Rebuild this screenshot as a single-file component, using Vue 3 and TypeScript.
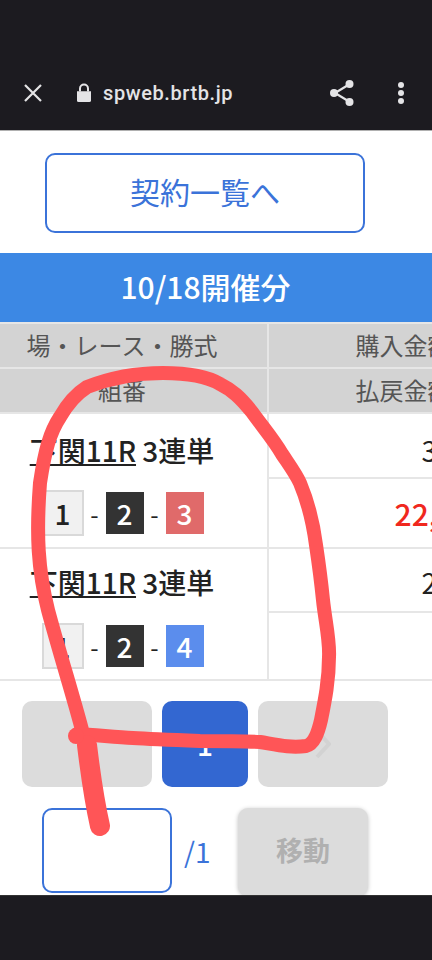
<script setup lang="ts">
interface Ticket { place: string; kind: string; nums: { n: number; cls: string }[]; buy: string; pay: string }
const tickets: Ticket[] = [
  { place: '下関11R', kind: '3連単', nums: [{ n: 1, cls: 'w' }, { n: 2, cls: 'k' }, { n: 3, cls: 'r' }], buy: '300円', pay: '22,400円' },
  { place: '下関11R', kind: '3連単', nums: [{ n: 1, cls: 'w' }, { n: 2, cls: 'k' }, { n: 4, cls: 'b' }], buy: '200円', pay: '' },
]
</script>

<template>
  <div class="screen">
    <header class="toolbar">
      <svg class="ic-x" width="20" height="20" viewBox="0 0 20 20"><path d="M2 2L18 18M18 2L2 18" stroke="#e4e4e6" stroke-width="2.2" fill="none"/></svg>
      <svg class="ic-lock" width="16" height="20" viewBox="0 0 16 20"><path d="M1 8.2h14v9.3a1.6 1.6 0 0 1-1.6 1.6H2.6A1.6 1.6 0 0 1 1 17.5z" fill="#e4e4e6"/><path d="M4 8.5V5.5a4 4 0 0 1 8 0v3" stroke="#e4e4e6" stroke-width="2" fill="none"/></svg>
      <span class="url">spweb.brtb.jp</span>
      <svg class="ic-share" width="26" height="28" viewBox="0 0 26 28"><path d="M20 5.5L6 14L20 22.5" stroke="#e4e4e6" stroke-width="2.2" fill="none"/><circle cx="20.5" cy="5" r="4" fill="#e4e4e6"/><circle cx="5" cy="14" r="4" fill="#e4e4e6"/><circle cx="20.5" cy="23" r="4" fill="#e4e4e6"/></svg>
      <svg class="ic-more" width="8" height="24" viewBox="0 0 8 24"><circle cx="4" cy="4" r="3" fill="#e4e4e6"/><circle cx="4" cy="12" r="3" fill="#e4e4e6"/><circle cx="4" cy="20" r="3" fill="#e4e4e6"/></svg>
    </header>

    <main class="page">
      <div class="top"><button class="list-btn">契約一覧へ</button></div>
      <h2 class="date">10/18開催分</h2>

      <div class="table">
        <div class="th lead">場・レース・勝式</div>
        <div class="th tail">購入金額</div>
        <div class="th lead">組番</div>
        <div class="th tail">払戻金額</div>

        <template v-for="(t, i) in tickets" :key="i">
          <div class="left" :class="'row' + i">
            <div class="title"><u>{{ t.place }}</u> {{ t.kind }}</div>
            <div class="nums">
              <template v-for="(x, j) in t.nums" :key="j">
                <span v-if="j" class="dash">-</span>
                <span class="num" :class="x.cls">{{ x.n }}</span>
              </template>
            </div>
          </div>
          <div class="right" :class="'row' + i">
            <div class="val">{{ t.buy }}</div>
            <div class="val red">{{ t.pay }}</div>
          </div>
        </template>
      </div>

      <nav class="pager">
        <div class="pg">
          <svg width="16" height="28" viewBox="0 0 16 28"><path d="M14 1L2 14L14 27" stroke="#d2d2d2" stroke-width="4" fill="none"/></svg>
        </div>
        <div class="cur">1</div>
        <div class="pg">
          <svg width="16" height="28" viewBox="0 0 16 28"><path d="M2 1L14 14L2 27" stroke="#d2d2d2" stroke-width="4" fill="none"/></svg>
        </div>
      </nav>

      <div class="jump">
        <div class="input"></div>
        <span class="total">/1</span>
        <div class="go">移動</div>
      </div>
    </main>

    <footer class="bottom"></footer>

    <svg class="scribble" width="432" height="960" viewBox="0 0 432 960" fill="none">
      <path d="M99 826C96 790 90 762 84 738C78 712 60 655 48 610C38 570 36 535 40 483C45 450 50 432 60 417C68 403 76 394 87 387C110 378 135 373 163 373C185 373 205 375 220 384C232 390 240 397 252 412C262 426 274 440 282 454C290 466 296 474 300 483C308 502 313 522 316 545C319 565 321 580 323 600C325 620 330 640 329 657C329 680 325 700 321 720C318 733 314 744 306 746C290 748 278 745 260 742C240 741 220 741 200 741C175 740 150 739 133 738C115 737 95 735 77 734" stroke="#ff5557" stroke-width="14" stroke-linecap="round" stroke-linejoin="round"/>
      <path d="M87 745C90 770 93 795 100 826" stroke="#ff5557" stroke-width="20" stroke-linecap="round"/>
      <circle cx="76" cy="736" r="8" fill="#ff5557"/>
    </svg>
  </div>
</template>

<style>
html, body { margin: 0; background: #1c1b20; }
</style>

<style scoped>
.screen {
  position: relative;
  width: 432px;
  height: 960px;
  display: flex;
  flex-direction: column;
  overflow: hidden;
  background: #1c1b20;
  font-family: "Noto Sans CJK JP", "Noto Sans", sans-serif;
}
.toolbar {
  height: 131px;
  box-sizing: border-box;
  flex: none;
  display: flex;
  align-items: center;
  padding: 55px 27px 0 23px;
  border-bottom: 1px solid #b0b0b0;
}
.ic-lock { margin-left: 33px; }
.url {
  margin-left: 11px;
  font-family: Roboto, sans-serif;
  font-weight: 500;
  font-size: 20px;
  letter-spacing: 0.6px;
  color: #e4e4e6;
  flex: 1;
}
.ic-more { margin-left: 42px; }
.page {
  flex: 1;
  min-height: 0;
  overflow: hidden;
  background: #fff;
}
.top { padding: 22px 0 20px 45px; }
.list-btn {
  display: block;
  width: 320px;
  height: 80px;
  box-sizing: border-box;
  border: 2px solid #3b73d9;
  border-radius: 10px;
  background: #fff;
  color: #3b73d9;
  font: 400 30px "Noto Sans CJK JP", sans-serif;
  padding: 0 0 4px;
}
.date {
  margin: 0;
  height: 69px;
  line-height: 67px;
  padding-right: 21px;
  background: #3c88e4;
  color: #fff;
  text-align: center;
  font-size: 30px;
  font-weight: 500;
}
.table {
  width: 530px;
  display: grid;
  grid-template-columns: 267px 1fr;
  border-top: 2px solid #e6e6e6;
}
.th {
  height: 43px;
  line-height: 42px;
  text-align: center;
  font-size: 24px;
  color: #555;
  background: #d3d3d3;
  border-bottom: 2px solid #e6e6e6;
}
.lead { padding-right: 23px; }
.tail { padding-left: 8px; }
.tail, .right { border-left: 2px solid #e6e6e6; }
.left {
  border-bottom: 2px solid #e6e6e6;
  display: flex;
  flex-direction: column;
  align-items: center;
}
.left.row0 { height: 133px; }
.left.row1 { height: 130px; }
.title {
  height: 44px;
  line-height: 44px;
  font-size: 28px;
  font-weight: 500;
  color: #222;
  white-space: nowrap;
  margin-right: 23px;
}
.row0 .title { margin-top: 14px; }
.row1 .title { margin-top: 11px; }
.nums {
  display: flex;
  align-items: center;
  height: 46px;
  margin-left: -22px;
}
.row0 .nums { margin-top: 18px; }
.row1 .nums { margin-top: 19px; }
.dash {
  width: 22px;
  text-align: center;
  font-size: 24px;
  color: #222;
}
.num {
  width: 38px;
  height: 42px;
  line-height: 42px;
  text-align: center;
  font-size: 28px;
  font-weight: 500;
  color: #fff;
}
.num.w {
  box-sizing: border-box;
  width: 42px;
  height: 46px;
  line-height: 42px;
  background: #f1f1f1;
  border: 2px solid #d9d9d9;
  color: #222;
}
.num.k { background: #333; }
.num.r { background: #e06a6a; }
.num.b { background: #5b8ded; }
.right {
  display: flex;
  flex-direction: column;
  border-bottom: 2px solid #e6e6e6;
}
.val {
  padding-right: 34px;
  text-align: right;
  font-size: 28px;
  color: #222;
  flex: none;
  white-space: nowrap;
}
.val:first-child { border-bottom: 2px solid #e6e6e6; }
.row0 .val:first-child { height: 63px; line-height: 72px; }
.row1 .val:first-child { height: 62px; line-height: 66px; }
.val.red {
  color: #f0281e;
  font-size: 30px;
  font-weight: 500;
  line-height: 68px;
  padding-right: 11px;
}
.pager {
  margin-top: 20px;
  padding-left: 22px;
  display: flex;
  gap: 10px;
}
.pg, .cur {
  height: 86px;
  border-radius: 10px;
  display: flex;
  align-items: center;
  justify-content: center;
}
.pg { width: 130px; background: #dcdcdc; }
.cur {
  width: 86px;
  background: #3367d1;
  color: #fff;
  font-size: 28px;
  font-weight: 500;
}
.jump {
  margin-top: 21px;
  padding-left: 42px;
  display: flex;
  align-items: flex-start;
}
.input {
  box-sizing: border-box;
  width: 130px;
  height: 85px;
  border: 2px solid #3b73d9;
  border-radius: 10px;
  background: #fff;
}
.total {
  margin-left: 12px;
  width: 54px;
  height: 88px;
  line-height: 87px;
  font-size: 28px;
  color: #3b73d9;
}
.go {
  box-sizing: border-box;
  width: 130px;
  height: 88px;
  padding-bottom: 6px;
  border-radius: 10px;
  background: #dcdcdc;
  box-shadow: 0 1px 4px rgba(0, 0, 0, 0.25);
  color: #b0b0b0;
  font-size: 27px;
  font-weight: 700;
  display: flex;
  align-items: center;
  justify-content: center;
}
.bottom { height: 65px; flex: none; background: #1c1b20; border-top: 1px solid #333; box-sizing: border-box; }
.scribble { position: absolute; left: 0; top: 0; pointer-events: none; }
</style>
